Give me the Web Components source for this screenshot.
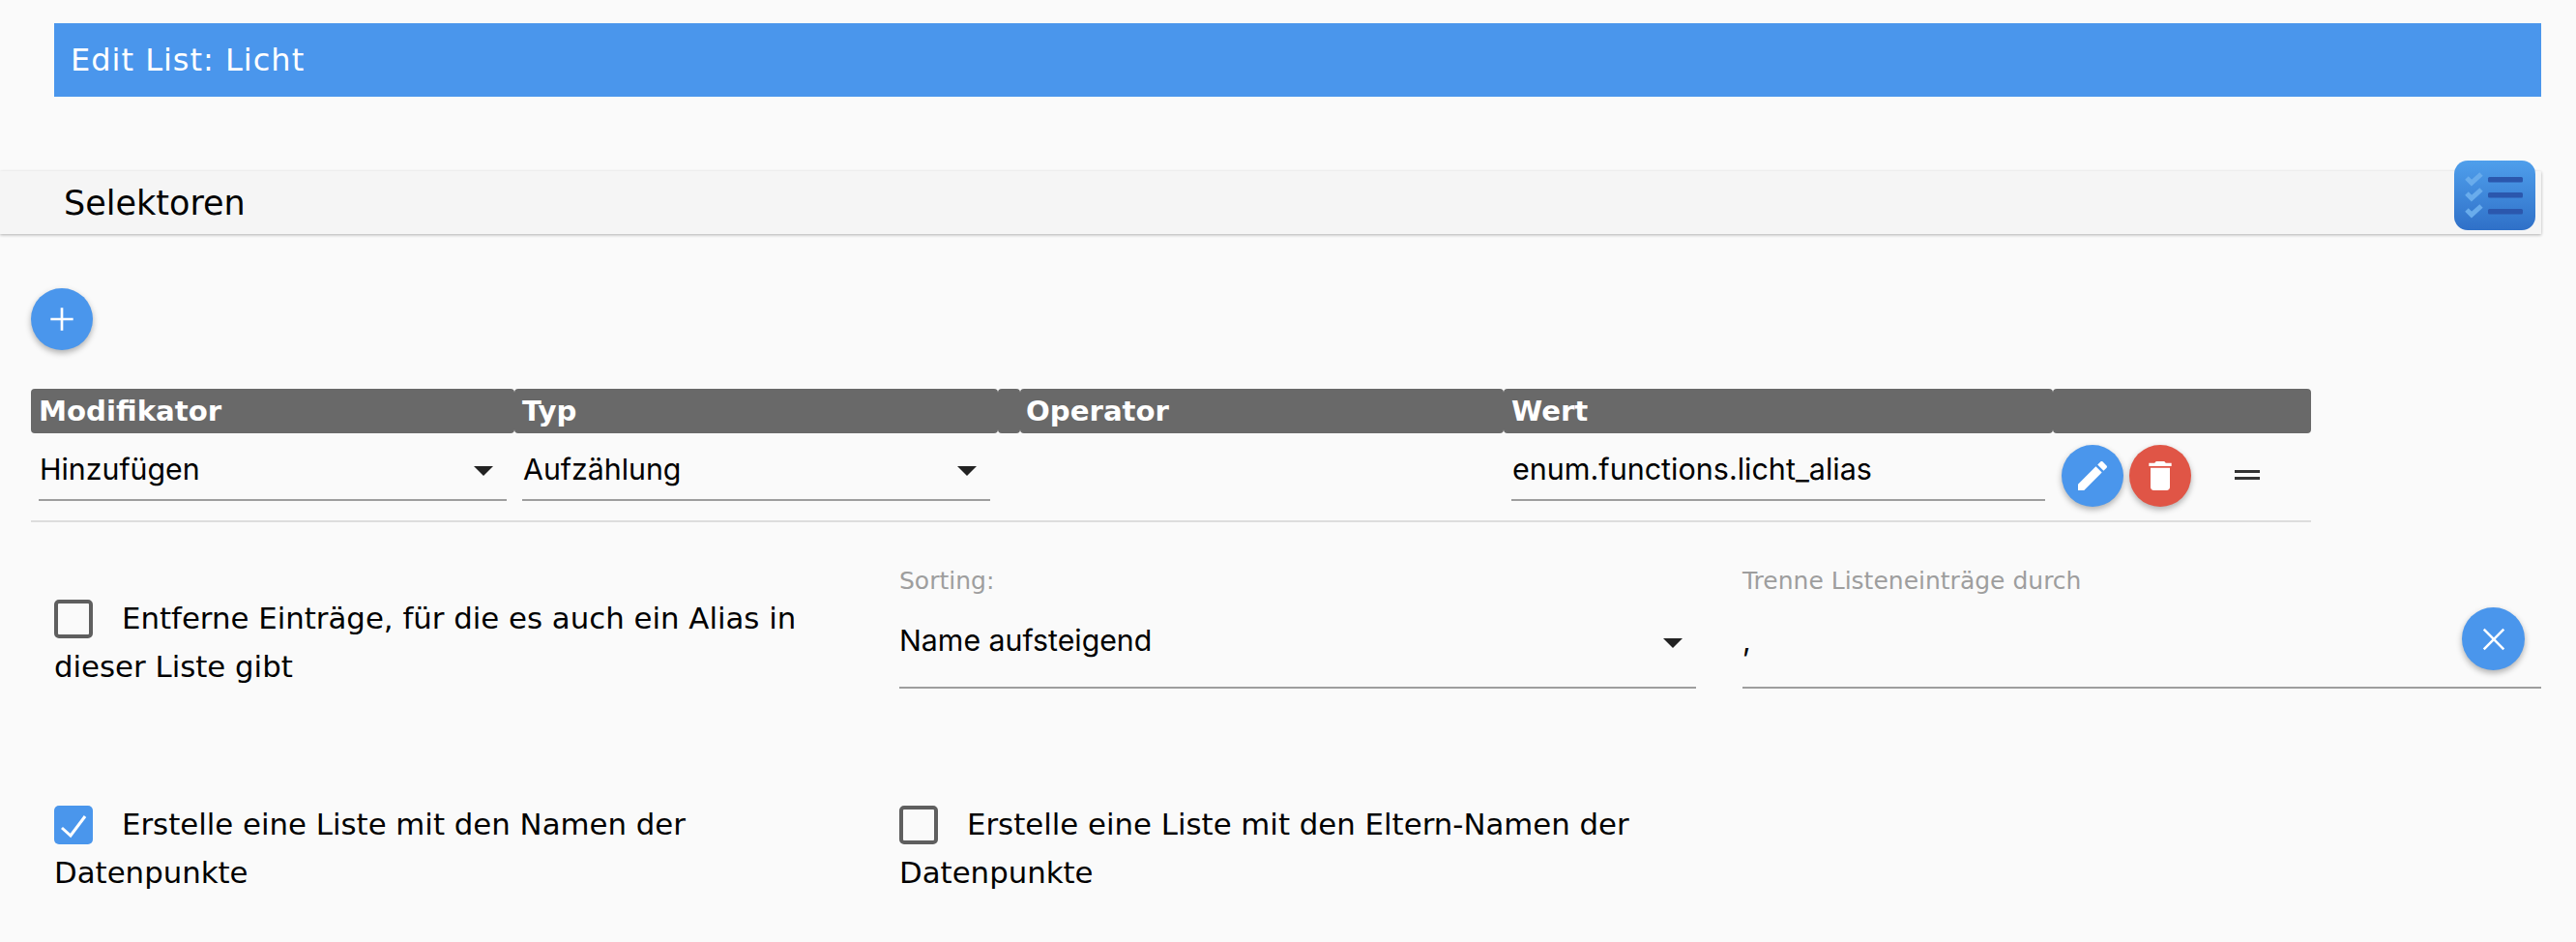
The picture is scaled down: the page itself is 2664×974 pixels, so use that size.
<!DOCTYPE html>
<html><head><meta charset="utf-8">
<style>
html,body{margin:0;padding:0;background:#fafafa;}
body{width:2664px;height:974px;overflow:hidden;font-family:"DejaVu Sans",sans-serif;color:#000;}
</style></head>
<body>
<edit-page></edit-page>
<script>
const UI='"Inter","Roboto","Liberation Sans",sans-serif';
const LABEL='"DejaVu Sans","Open Sans",sans-serif';
const ICONS={
 add:'<path fill="#fff" d="M19 12.8h-6.2V19h-1.6v-6.2H5v-1.6h6.2V5h1.6v6.2H19z"/>',
 edit:'<path fill="#fff" d="M3 17.25V21h3.75L17.81 9.94l-3.75-3.75L3 17.25zM20.71 7.04c.39-.39.39-1.02 0-1.41l-2.34-2.34c-.39-.39-1.02-.39-1.41 0l-1.83 1.83 3.75 3.75 1.83-1.83z"/>',
 del:'<path fill="#fff" d="M6 19c0 1.1.9 2 2 2h8c1.1 0 2-.9 2-2V7H6v12zM19 4h-3.5l-1-1h-5l-1 1H5v2h14V4z"/>',
 close:'<path fill="none" stroke="#fff" stroke-width="1.6" d="M5.5 5.5L18.5 18.5M18.5 5.5L5.5 18.5"/>'
};
class Base extends HTMLElement{
  render(html){ if(!this.shadowRoot) this.attachShadow({mode:'open'}); this.shadowRoot.innerHTML=html; }
}
customElements.define('title-bar',class extends Base{connectedCallback(){this.render(`<style>
:host{display:flex;align-items:center;height:76px;margin:24px 36px 0 56px;padding:0 0 0 17px;box-sizing:border-box;background:#4a96ec;color:#fff;font:400 32px ${LABEL};letter-spacing:1px}
</style><slot></slot>`)}});
customElements.define('section-bar',class extends Base{connectedCallback(){this.render(`<style>
:host{display:flex;align-items:center;position:relative;height:65px;margin:77px 36px 0 0;padding:0 0 0 66px;box-sizing:border-box;background:#f5f5f5;box-shadow:0 1px 3px rgba(0,0,0,.3);color:#000;font:400 35px ${LABEL}}
svg{position:absolute;right:6px;top:-11px}
</style><slot></slot>
<svg width="84" height="72" viewBox="0 0 84 72"><defs><linearGradient id="g" x1="0" y1="0" x2="0" y2="1"><stop offset="0" stop-color="#4f9fec"/><stop offset="1" stop-color="#2f70c8"/></linearGradient></defs>
<rect width="84" height="72" rx="14" fill="url(#g)"/>
<g fill="none" stroke="#69acec" stroke-width="5"><path d="M13 18l5 5 10-9"/><path d="M13 34l5 5 10-9"/><path d="M13 51l5 5 10-9"/></g>
<g fill="#2b57ad"><rect x="35" y="17" width="36" height="5.5" rx="1.5"/><rect x="35" y="33" width="36" height="5.5" rx="1.5"/><rect x="35" y="50" width="36" height="5.5" rx="1.5"/></g></svg>`)}});
customElements.define('round-button',class extends Base{connectedCallback(){
 const s=this.getAttribute('size')||64,i=this.getAttribute('icon'),c=this.getAttribute('color')||'#4a96ec',is=this.getAttribute('isize')||40;
 this.render(`<style>:host{display:flex;align-items:center;justify-content:center;flex:none;width:${s}px;height:${s}px;border-radius:50%;background:${c};box-shadow:0 3px 6px rgba(0,0,0,.3)}svg{display:block}</style>
 <svg width="${is}" height="${is}" viewBox="0 0 24 24">${ICONS[i]}</svg>`)}});
customElements.define('select-field',class extends Base{connectedCallback(){this.render(`<style>
:host{display:flex;align-items:flex-start;justify-content:space-between;box-sizing:border-box;border-bottom:2px solid #9e9e9e;font-family:${UI};font-size:30.3px;color:#000;padding:0 14px 0 1px}
.a{width:0;height:0;border-left:10px solid transparent;border-right:10px solid transparent;border-top:10px solid #222;margin-top:var(--arrow-top,26px)}
</style><span><slot></slot></span><span class="a"></span>`)}});
customElements.define('text-field',class extends Base{connectedCallback(){this.render(`<style>
:host{display:block;box-sizing:border-box;border-bottom:2px solid #9e9e9e;font-family:${UI};font-size:30.5px;color:#000;padding:0 0 0 1px}
</style><slot></slot>`)}});
customElements.define('table-head',class extends Base{connectedCallback(){this.render(`<style>
:host{display:block;box-sizing:border-box;height:46px;background:#696969;border-radius:4px;padding-left:var(--pad,8px);color:#fff;font:700 29.2px/47px ${LABEL};white-space:nowrap;overflow:hidden}
</style><slot></slot>`)}});
customElements.define('selector-table',class extends Base{connectedCallback(){this.render(`<style>
:host{display:grid;grid-template-columns:500px 500px 23px 500px 568px 267px;width:2358px;margin:40px 0 0 32px}
.row{grid-column:1/-1;display:grid;grid-template-columns:subgrid;height:92px;box-sizing:border-box;border-bottom:2px solid #ddd}
.c{box-sizing:border-box;padding:8px 8px 0 8px}
.act{display:flex;align-items:flex-start;gap:6px;padding:12px 0 0 9px}
.eq{width:26px;height:4px;border-top:3px solid #333;border-bottom:3px solid #333;margin:26px 0 0 39px}
select-field,text-field{height:62px;line-height:58px}
</style>
<table-head>Modifikator</table-head><table-head>Typ</table-head><table-head></table-head><table-head style="--pad:6px">Operator</table-head><table-head>Wert</table-head><table-head></table-head>
<div class="row">
<div class="c"><select-field>Hinzufügen</select-field></div>
<div class="c"><select-field>Aufzählung</select-field></div>
<div></div><div></div>
<div class="c"><text-field>enum.functions.licht_alias</text-field></div>
<div class="act"><round-button icon="edit"></round-button><round-button icon="del" color="#e05546" ></round-button><div class="eq"></div></div>
</div>`)}});
customElements.define('check-label',class extends Base{connectedCallback(){
 const on=this.hasAttribute('checked');
 this.render(`<style>
:host{display:block;font:400 30.8px/50px ${LABEL};color:#000}
.b{display:inline-block;vertical-align:-10px;width:40px;height:40px;box-sizing:border-box;border-radius:5px;margin-right:30px;${on?'background:#4a96ec;':'border:4px solid #5f5f5f;'}}
svg{display:block}
</style><span class="b">${on?'<svg width="40" height="40" viewBox="0 0 40 40"><path d="M8 23l9 8L32 11" fill="none" stroke="#fff" stroke-width="3"/></svg>':''}</span><slot></slot>`)}});
customElements.define('float-field',class extends Base{connectedCallback(){this.render(`<style>
:host{display:block;position:relative;font:400 25px ${LABEL};color:#9e9e9e}
.l{display:block;height:30px;line-height:30px;white-space:nowrap}
::slotted(*){margin-top:26px}
</style><span class="l">${this.getAttribute('label')}</span><slot></slot>`)}});
customElements.define('edit-page',class extends Base{connectedCallback(){this.render(`<style>
:host{display:block}
.add{margin:56px 0 0 32px;width:64px}
.opts{display:grid;grid-template-columns:874px 824px 874px;margin:0 0 0 56px}
check-label.w{width:800px}
.cell{position:relative;box-sizing:border-box}
.first{padding-top:74px;height:287px}
.sort{padding-top:46px}
.third{padding:46px 0 0 48px;position:relative}
.sort select-field{height:70px;line-height:40px;--arrow-top:18px;padding-right:14px;padding-left:0}
.third text-field{height:70px;line-height:40px;padding-left:0}
.x{position:absolute;right:17px;top:88px}
</style>
<title-bar>Edit List: Licht</title-bar>
<section-bar>Selektoren</section-bar>
<div class="add"><round-button icon="add"></round-button></div>
<selector-table></selector-table>
<div class="opts">
<div class="cell first"><check-label class="w">Entferne Einträge, für die es auch ein Alias in dieser Liste gibt</check-label></div>
<div class="cell sort"><float-field label="Sorting:"><select-field>Name aufsteigend</select-field></float-field></div>
<div class="cell third"><float-field label="Trenne Listeneinträge durch"><text-field>,</text-field></float-field><round-button class="x" icon="close" size="65" isize="38"></round-button></div>
<div class="cell"><check-label class="w" checked>Erstelle eine Liste mit den Namen der Datenpunkte</check-label></div>
<div class="cell"><check-label class="w">Erstelle eine Liste mit den Eltern-Namen der Datenpunkte</check-label></div>
</div>`)}});
</script>
</body></html>
